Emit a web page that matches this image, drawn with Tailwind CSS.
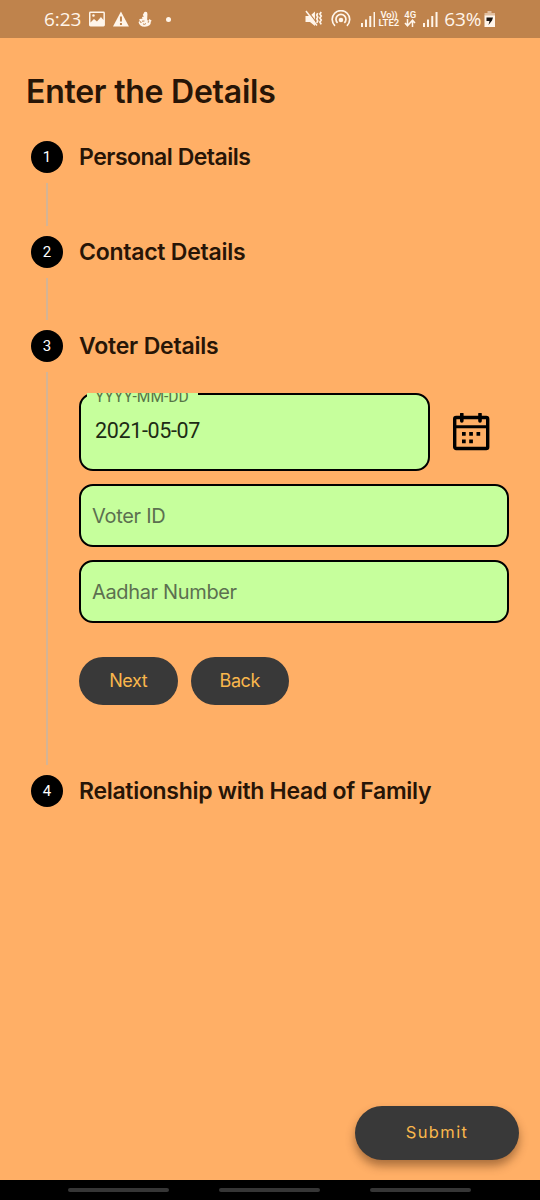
<!DOCTYPE html>
<html lang="en">
<head>
<meta charset="utf-8">
<title>Enter the Details</title>
<script src="https://cdn.jsdelivr.net/npm/@tailwindcss/browser@4"></script>
</head>
<body class="w-[540px] h-[1200px] overflow-hidden flex flex-col bg-[#ffaf66] text-[#271507] font-['Inter','Roboto',sans-serif]">
<header class="h-[38px] shrink-0 bg-[#bf834c] text-[#fff5ea] flex items-center pl-[44px] pr-[44px] font-['Open_Sans',sans-serif]">
  <span class="w-[37px] text-[19px] leading-[38px] tracking-[-0.1px] whitespace-nowrap">6:23</span>
  <svg class="ml-[8px]" width="16" height="16" viewBox="0 0 16 16"><path fill="currentColor" fill-rule="evenodd" d="M1.500 .5h13Q16 .5 16 2v12Q16 15.500 14.500 15.500h-13Q0 15.500 0 14V2Q0 .5 1.500 .5ZM1.500 2v9.500L5 8l3 2.500L12 6l2.500 3V2ZM4.500 3.200a1.300 1.300 0 1 1 0 2.600 1.300 1.300 0 0 1 0-2.600Z"/></svg>
  <svg class="ml-[7px]" width="18" height="16" viewBox="0 0 18 16"><path fill="currentColor" fill-rule="evenodd" d="M9 .5 17 15.500H1ZM8 5.500v5h2v-5ZM8 12v2h2v-2Z"/></svg>
  <svg class="ml-[8px]" width="14" height="17" viewBox="0 0 14 17"><path fill="currentColor" d="M6.500 1Q9.500 0 9.500 3L9.200 8.500Q10.500 9.500 9.800 12Q11.500 11.500 11.300 10L10 10.500 11.500 8 14 10 13 10.200Q13 15.500 7 15.800 1.500 16 .5 11L2 10 2.500 12 4 11.500 1 9Q1.500 7.500 4.500 7.800L4 6 6 5.500 4.800 4Z"/><path d="M4 10.200 6.500 10M5 13q2 1 3-.5" fill="none" stroke="#bf834c" stroke-width="1"/></svg>
  <span class="ml-[14px] size-[5px] rounded-full bg-current"></span>
  <svg class="ml-[134px]" width="18" height="18" viewBox="0 0 18 18"><path fill="currentColor" d="M.5 6h4.500L10 1.500V16L5 12H.5Z"/><path d="M0 0l12 16" stroke="#bf834c" stroke-width="1.200" transform="translate(1.300 -1)"/><path d="M1 1l11 14.500" stroke="currentColor" stroke-width="1.500"/><path d="M12.800 3 11.800 5l1 2-1 2 1 2-1 2M16.300 2 15 4l1.300 2L15 8l1.300 2L15 12l1.300 2.500" fill="none" stroke="currentColor" stroke-width="1.700"/></svg>
  <svg class="ml-[8px]" width="20" height="18" viewBox="0 0 20 18" fill="none" stroke="currentColor" stroke-width="1.700"><path d="M4 15.800A8.800 8.800 0 1 1 16 15.800M6.600 13a5 5 0 1 1 6.800 0"/><circle cx="10" cy="10" r="2.300" fill="currentColor" stroke="none"/></svg>
  <svg class="ml-[10px]" width="15" height="16" viewBox="0 0 15 16" fill="currentColor"><path d="M0 12h2v4H0zM4 8.500h2V16H4zM8.300 5h2v11h-2zM12.600 1h2v15h-2z"/></svg>
  <div class="ml-[3px] w-[21px] flex flex-col items-center text-[9.500px] leading-[8px] font-semibold font-['Roboto',sans-serif] whitespace-nowrap"><span class="tracking-[-0.300px]">Vo))</span><span>LTE2</span></div>
  <div class="ml-[4px] w-[14px] flex flex-col items-center text-[9.500px] leading-[8px] font-semibold font-['Roboto',sans-serif]"><span>4G</span><svg width="12" height="8" viewBox="0 0 12 8" fill="none" stroke="currentColor" stroke-width="1.500"><path d="M3.500 0v6.500M1 4l2.500 2.800L6 4M8.500 8V1.500M6 4l2.500-2.800L11 4"/></svg></div>
  <svg class="ml-[6px]" width="15" height="16" viewBox="0 0 15 16" fill="currentColor"><path d="M0 12h2v4H0zM4 8.500h2V16H4zM8.300 5h2v11h-2zM12.600 1h2v15h-2z"/></svg>
  <span class="ml-[6px] w-[38px] text-[19px] leading-[38px] tracking-[-0.1px] whitespace-nowrap">63%</span>
  <svg class="ml-[2px] shrink-0" width="12" height="16" viewBox="0 0 12 16"><path fill="#e2bf9f" d="M3.500 0h4v2H11v3H.5V2h3z"/><path fill="#fff5ea" d="M.5 4.500H11V16H.5z"/><path fill="#17120e" d="M2.500 6.500H9L8 9.500 4.500 14 5.500 10H2.500Z"/></svg>
</header>

<main class="h-[1142px] shrink-0 flex flex-col">
  <h1 class="mt-[34px] ml-[26px] h-[40px] leading-[40px] text-[32px] font-semibold tracking-[-0.25px] whitespace-nowrap">Enter the Details</h1>

  <ol class="mt-[29px] pl-[31px] pr-[31px] flex flex-col">
    <li class="flex h-[94.500px] gap-4">
      <div class="w-8 flex flex-col items-center"><span class="size-8 shrink-0 rounded-full bg-black text-white flex items-center justify-center text-[15px] font-['Roboto',sans-serif]">1</span><i class="w-[2px] mr-px grow my-[10px] bg-[#d5b494]"></i></div>
      <h2 class="leading-8 text-[23px] font-semibold tracking-[-0.5px] whitespace-nowrap">Personal Details</h2>
    </li>
    <li class="flex h-[94.500px] gap-4">
      <div class="w-8 flex flex-col items-center"><span class="size-8 shrink-0 rounded-full bg-black text-white flex items-center justify-center text-[15px] leading-none pt-px font-['Roboto',sans-serif]">2</span><i class="w-[2px] mr-px grow my-[10px] bg-[#d5b494]"></i></div>
      <h2 class="leading-8 text-[23px] font-semibold tracking-[-0.25px] whitespace-nowrap">Contact Details</h2>
    </li>
    <li class="flex h-[445px] gap-4">
      <div class="w-8 shrink-0 flex flex-col items-center"><span class="size-8 shrink-0 rounded-full bg-black text-white flex items-center justify-center text-[15px] font-['Roboto',sans-serif]">3</span><i class="w-[2px] mr-px grow my-[10px] bg-[#d5b494]"></i></div>
      <div class="grow flex flex-col">
        <h2 class="leading-8 text-[23px] font-semibold tracking-[-0.2px] whitespace-nowrap">Voter Details</h2>
        <div class="mt-[31px] flex">
          <div class="relative w-[351px] h-[78px] rounded-[14px] border-2 border-black bg-[#c6ff9c] flex items-center pl-[14px] pb-[2px]">
            <span class="text-[21.500px] tracking-[-0.35px] text-[#1d2b14] font-['Roboto',sans-serif] whitespace-nowrap">2021-05-07</span>
            <span class="absolute left-[6px] top-[-2px] w-[111px] h-[11px] overflow-hidden bg-[#c6ff9c] pl-[8px]"><span class="block mt-[-5px] text-[15.600px] leading-[18px] text-[#577447] font-['Roboto',sans-serif] whitespace-nowrap">YYYY-MM-DD</span></span>
          </div>
          <svg class="ml-[22px] mt-[20px]" width="38" height="38" viewBox="0 0 38 38"><g fill="none" stroke="#000"><rect x="2.700" y="4.500" width="33" height="31" rx="1.500" stroke-width="3.400"/><path d="M2.700 13.800h33" stroke-width="3"/><path d="M9.800 1v7M28 1v7" stroke-width="3.600" stroke-linecap="round"/></g><path d="M10 19h3.700v3.700H10zM17.200 19h3.700v3.700h-3.700zM24.500 19h3.700v3.700h-3.700zM10 26.500h3.700v3.700H10zM17.200 26.500h3.700v3.700h-3.700z"/></svg>
        </div>
        <div class="mt-[13px] w-[430px] h-[63px] rounded-[14px] border-2 border-black bg-[#c6ff9c] flex items-center pl-[11px] text-[20px] tracking-[-0.3px] text-[#5c7050]"><span>Voter ID</span></div>
        <div class="mt-[13px] w-[430px] h-[63px] rounded-[14px] border-2 border-black bg-[#c6ff9c] flex items-center pl-[11px] text-[20px] tracking-[-0.35px] text-[#5c7050]"><span>Aadhar Number</span></div>
        <div class="mt-[34px] flex gap-[13px] text-[18px] tracking-[-0.4px] text-[#f9b74c]">
          <button class="w-[98.500px] h-[48px] pb-px rounded-full bg-[#393939]">Next</button>
          <button class="w-[98.500px] h-[48px] pb-px rounded-full bg-[#393939]">Back</button>
        </div>
      </div>
    </li>
    <li class="flex gap-4">
      <span class="size-8 shrink-0 rounded-full bg-black text-white flex items-center justify-center text-[15px] font-['Roboto',sans-serif]">4</span>
      <h2 class="leading-8 text-[23px] font-semibold tracking-[-0.3px] whitespace-nowrap">Relationship with Head of Family</h2>
    </li>
  </ol>

  <button class="mt-auto mb-[20px] mr-[21px] self-end w-[164px] h-[54px] pb-px rounded-full bg-[#393939] text-[#f9b74c] text-[16.500px] tracking-[1.4px] shadow-[0_6px_10px_rgba(70,35,10,0.45)]">Submit</button>
</main>

<nav class="h-[20px] shrink-0 bg-black flex pl-[68px] pt-[8px] gap-[50px]">
  <i class="w-[101px] h-[4px] rounded-full bg-[#363636]"></i>
  <i class="w-[101px] h-[4px] rounded-full bg-[#363636]"></i>
  <i class="w-[101px] h-[4px] rounded-full bg-[#363636]"></i>
</nav>
</body>
</html>
